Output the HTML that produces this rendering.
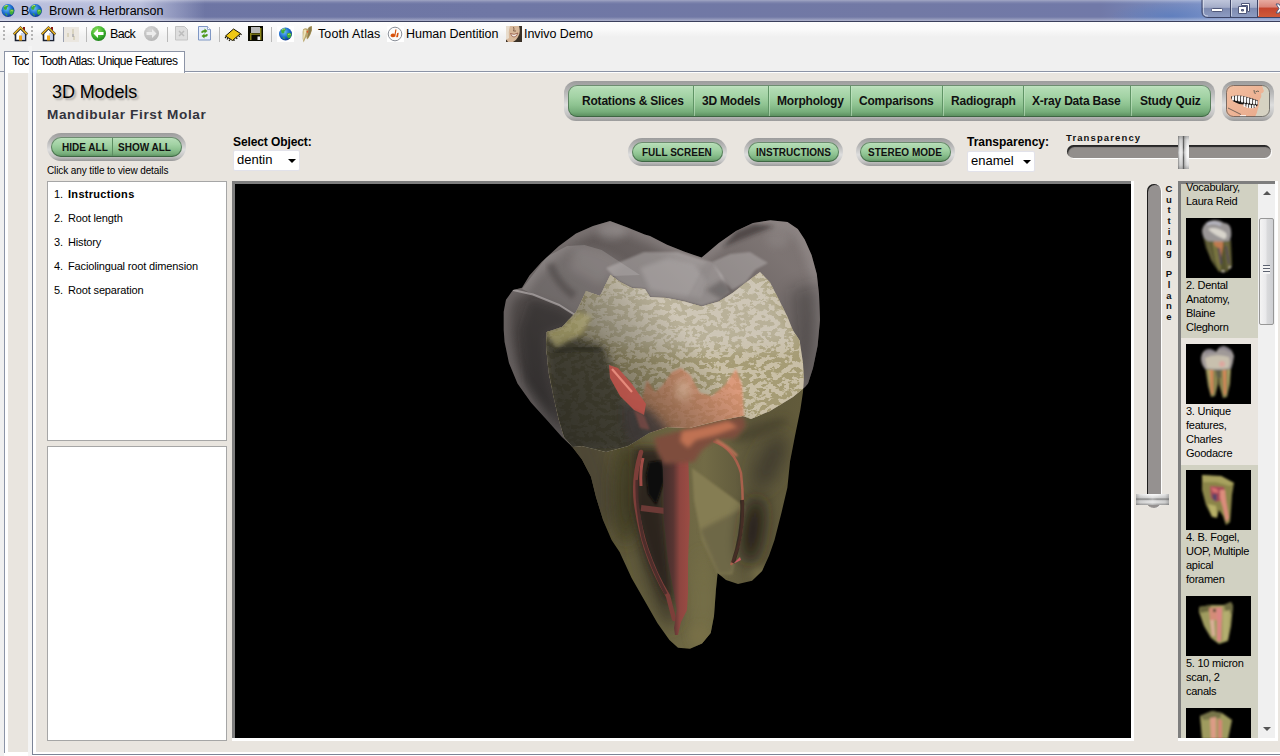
<!DOCTYPE html>
<html>
<head>
<meta charset="utf-8">
<title>Brown &amp; Herbranson</title>
<style>
*{box-sizing:border-box;margin:0;padding:0}
html,body{width:1280px;height:756px;overflow:hidden;background:#fff;font-family:"Liberation Sans",sans-serif;color:#000}
.abs{position:absolute}
#titlebar{left:0;top:0;width:1280px;height:21px;background:
linear-gradient(rgba(255,255,255,0.35) 0,rgba(255,255,255,0.12) 2px,rgba(255,255,255,0) 4px,rgba(255,255,255,0) 17px,rgba(255,255,255,0.3) 20px,rgba(255,255,255,0.45) 21px),
linear-gradient(90deg,rgba(205,210,235,0.8) 0,rgba(205,210,235,0.8) 140px,rgba(205,210,235,0.45) 168px,rgba(205,210,235,0) 205px),
radial-gradient(ellipse 60px 14px at 1170px 16px,rgba(80,120,190,0.6),rgba(80,120,190,0) 100%),
linear-gradient(90deg,#6c74a3 0,#6f77a5 500px,#7279a5 900px,#7179a8 1100px,#7d92c6 1200px,#7d92c6 1280px)}
#titlebar .t{position:absolute;top:3px;font-size:12.5px;line-height:16px;color:#000;letter-spacing:-0.1px;white-space:nowrap}
#tline{left:0;top:21px;width:1280px;height:1px;background:#3a3f5c}
#toolbar{left:0;top:22px;width:1280px;height:24px;background:linear-gradient(#fdfdfd 0,#fafafa 30%,#f0f0f0 62%,#f0f0f0 100%)}
#tabstrip{left:0;top:46px;width:1280px;height:25px;background:#f0f0f0}
#tabline{left:0;top:71px;width:1280px;height:1px;background:#8c94a6}
.tb{position:absolute;top:26px;font-size:12.5px;line-height:16px;letter-spacing:-0.05px;color:#000;white-space:nowrap}
.sep{position:absolute;top:26px;width:1px;height:15px;background:#b5b5b5}
.grip{position:absolute;top:26px;width:2px;height:14px;background:repeating-linear-gradient(#bdbdbd 0 2px,transparent 2px 4px)}
.tab{position:absolute;top:51px;height:22px;background:#fff;border:1px solid #8c94a6;border-bottom:none;font-size:12px;line-height:18px;letter-spacing:-0.6px;white-space:nowrap;overflow:hidden}
#content{left:36px;top:73px;width:1244px;height:679px;background:#e9e5df}
.green{background:linear-gradient(#c4e4c4 0,#b2dbb3 12%,#a2d2a4 38%,#8ec391 62%,#76ad7a 84%,#55895a 100%);}
.bezel{position:absolute;background:linear-gradient(#9c9c9c 0,#b9b9b9 30%,#dedede 60%,#c2c2c2 85%,#9a9a9a 100%)}
.btxt{position:absolute;font-weight:bold;white-space:nowrap;color:#111}
.li{position:absolute;left:54px;font-size:11px;line-height:14px;white-space:nowrap;letter-spacing:-0.2px}
.li b{letter-spacing:0}
.sel{position:absolute;background:#fff;border:1px solid #e2e2ea;border-radius:2px;font-size:13px;line-height:18px;padding-left:3px}
.sel i{position:absolute;right:3px;top:8px;border:4px solid transparent;border-top:4px solid #000;border-bottom:none}
.cap{position:absolute;left:1186px;font-size:11px;line-height:14px;white-space:nowrap;letter-spacing:-0.25px}
.thumb{position:absolute;left:1186px;width:65px;height:60px;background:#000;overflow:hidden}

.nd{top:86px;width:2px;height:30px;background:linear-gradient(90deg,#5f9465 0 1px,rgba(200,232,200,0.55) 1px 2px)}
.nt{top:94px;font-size:12px;line-height:15px;letter-spacing:-0.2px}
.st{top:142px;font-size:10px;line-height:12px}
.st2{top:147px;font-size:10px;line-height:12px}
</style>
</head>
<body>
<div id="titlebar" class="abs">
  <span class="t" style="left:21px">B</span>
  <span class="t" style="left:49px">Brown &amp; Herbranson</span>
</div>
<div id="tline" class="abs"></div>
<div id="toolbar" class="abs"></div>
<div id="tabstrip" class="abs"></div>
<div id="tabline" class="abs"></div>


<!-- title icons -->
<svg class="abs" style="left:0;top:0" width="60" height="22" viewBox="0 0 60 22">
 <defs>
  <radialGradient id="gl" cx="0.4" cy="0.35" r="0.7"><stop offset="0" stop-color="#6fc0f8"/><stop offset="0.55" stop-color="#1c6fd0"/><stop offset="1" stop-color="#0a2f86"/></radialGradient>
  <g id="globe"><circle cx="0" cy="0" r="6.5" fill="url(#gl)"/><path d="M-4.5,-3.5 q2,-2.5 4.5,-2 q1,1.5 -1,2.5 q0.5,2 -1.5,2.5 q-2,-0.5 -2,-3z M1.5,-0.5 q3,-1.5 4.5,0.5 q0,3 -2.5,4.5 q-2.5,-1 -2,-5z M-3,2.5 q2,0 2.5,2.5 q-1.5,0.8 -2.5,-2.5z" fill="#3fae3a"/><path d="M-3.5,-4 q1.5,-1.5 3,-1 M2.5,0.5 q1.5,-0.8 2.5,0" stroke="#d9e86a" stroke-width="0.8" fill="none"/></g>
 </defs>
 <g transform="translate(8,10.5)"><circle cx="0" cy="0" r="6.5" fill="url(#gl)"/><path d="M-4.5,-3.5 q2,-2.5 4.5,-2 q1,1.5 -1,2.5 q0.5,2 -1.5,2.5 q-2,-0.5 -2,-3z M1.5,-0.5 q3,-1.5 4.5,0.5 q0,3 -2.5,4.5 q-2.5,-1 -2,-5z M-3,2.5 q2,0 2.5,2.5 q-1.5,0.8 -2.5,-2.5z" fill="#3fae3a"/><path d="M-3.5,-4 q1.5,-1.5 3,-1 M2.5,0.5 q1.5,-0.8 2.5,0" stroke="#d9e86a" stroke-width="0.8" fill="none"/></g>
 <g transform="translate(35.5,10.5)"><circle cx="0" cy="0" r="6.5" fill="url(#gl)"/><path d="M-4.5,-3.5 q2,-2.5 4.5,-2 q1,1.5 -1,2.5 q0.5,2 -1.5,2.5 q-2,-0.5 -2,-3z M1.5,-0.5 q3,-1.5 4.5,0.5 q0,3 -2.5,4.5 q-2.5,-1 -2,-5z M-3,2.5 q2,0 2.5,2.5 q-1.5,0.8 -2.5,-2.5z" fill="#3fae3a"/><path d="M-3.5,-4 q1.5,-1.5 3,-1 M2.5,0.5 q1.5,-0.8 2.5,0" stroke="#d9e86a" stroke-width="0.8" fill="none"/></g>
</svg>
<!-- window buttons -->
<svg class="abs" style="left:1200px;top:0" width="80" height="20" viewBox="0 0 80 20">
 <defs>
  <linearGradient id="wb" x1="0" y1="0" x2="0" y2="1"><stop offset="0" stop-color="#c3c9dd"/><stop offset="0.45" stop-color="#a4adc9"/><stop offset="0.5" stop-color="#7d8ab0"/><stop offset="1" stop-color="#8e9cc2"/></linearGradient>
  <linearGradient id="wr" x1="0" y1="0" x2="0" y2="1"><stop offset="0" stop-color="#e9b0a6"/><stop offset="0.45" stop-color="#d98478"/><stop offset="0.5" stop-color="#c4452f"/><stop offset="1" stop-color="#cf5a3a"/></linearGradient>
 </defs>
 <path d="M2,-1 V12 Q2,17.5 8,17.5 H81 V-1z" fill="url(#wb)" stroke="#3c4466" stroke-width="1"/>
 <path d="M57.500,-1 V17 H81 V-1z" fill="url(#wr)"/>
 <path d="M30.500,0 V17 M57.500,0 V17" stroke="#3c4466" stroke-width="1"/>
 <path d="M3.500,0 V12 Q3.500,16 8,16 M31.500,0 V16 M58.500,0 V16" stroke="#e0e4f0" stroke-width="1" fill="none" opacity="0.7"/>
 <rect x="11.500" y="8.500" width="11" height="3" rx="1" fill="#fff" stroke="#50587a" stroke-width="1"/>
 <path d="M41.500,3.500 h8 v8 h-2 v-6 h-6z" fill="#fff" stroke="#50587a" stroke-width="1"/>
 <path d="M38.500,6.500 h8 v7 h-8z M41.500,9.500 v1.500 h2 v-1.500z" fill="#fff" stroke="#50587a" stroke-width="1" fill-rule="evenodd"/>
 <path d="M76,4 l3,0 l3,4.500 l-3,4.500 l-3,0 l3,-4.500z" fill="#fff" stroke="#50587a" stroke-width="1"/>
</svg>
<!-- toolbar icons -->
<svg class="abs" style="left:0;top:22px" width="600" height="24" viewBox="0 22 600 24">
 <defs>
  <g id="home">
   <path d="M10,27 h2 v5 h-2z" fill="#8c1c10"/>
   <path d="M2.500,33 V40.500 H12.500 V33 L7.500,28z" fill="#fff" stroke="#1a2030" stroke-width="1.600"/>
   <path d="M8,33 L12,33 L12,40 L7,40z" fill="#b8c6e6" opacity="0.8"/>
   <path d="M0.800,34.500 L7.500,27.800 L14.200,34.500" fill="none" stroke="#2a2a2a" stroke-width="2.600"/>
   <path d="M0.800,34.300 L7.500,27.600 L14.200,34.300" fill="none" stroke="#f2b81e" stroke-width="1.400"/>
   <rect x="6" y="35.500" width="3" height="5" fill="#f0a818"/>
  </g>
  <radialGradient id="gb" cx="0.4" cy="0.3" r="0.75"><stop offset="0" stop-color="#8fe060"/><stop offset="0.6" stop-color="#3bb22c"/><stop offset="1" stop-color="#1d7d1a"/></radialGradient>
  <radialGradient id="gg" cx="0.4" cy="0.3" r="0.75"><stop offset="0" stop-color="#d6d6d6"/><stop offset="1" stop-color="#b4b4b4"/></radialGradient>
 </defs>
 <g fill="#b4b4b4"><rect x="3" y="26" width="2" height="2"/><rect x="3" y="30" width="2" height="2"/><rect x="3" y="34" width="2" height="2"/><rect x="3" y="38" width="2" height="2"/>
 <rect x="31" y="26" width="2" height="2"/><rect x="31" y="30" width="2" height="2"/><rect x="31" y="34" width="2" height="2"/><rect x="31" y="38" width="2" height="2"/></g>
 <g transform="translate(13,0)">
   <path d="M10,27 h2 v5 h-2z" fill="#8c1c10"/>
   <path d="M2.500,33 V40.500 H12.500 V33 L7.500,28z" fill="#fff" stroke="#1a2030" stroke-width="1.600"/>
   <path d="M8,33 L12,33 L12,40 L7,40z" fill="#b8c6e6" opacity="0.8"/>
   <path d="M0.800,34.500 L7.500,27.800 L14.200,34.500" fill="none" stroke="#2a2a2a" stroke-width="2.600"/>
   <path d="M0.800,34.300 L7.500,27.600 L14.200,34.300" fill="none" stroke="#f2b81e" stroke-width="1.400"/>
   <rect x="6" y="35.500" width="3" height="5" fill="#f0a818"/>
  </g>
 <g transform="translate(41,0)">
   <path d="M10,27 h2 v5 h-2z" fill="#8c1c10"/>
   <path d="M2.500,33 V40.500 H12.500 V33 L7.500,28z" fill="#fff" stroke="#1a2030" stroke-width="1.600"/>
   <path d="M8,33 L12,33 L12,40 L7,40z" fill="#b8c6e6" opacity="0.8"/>
   <path d="M0.800,34.500 L7.500,27.800 L14.200,34.500" fill="none" stroke="#2a2a2a" stroke-width="2.600"/>
   <path d="M0.800,34.300 L7.500,27.600 L14.200,34.300" fill="none" stroke="#f2b81e" stroke-width="1.400"/>
   <rect x="6" y="35.500" width="3" height="5" fill="#f0a818"/>
  </g>
 <!-- faded icon -->
 <rect x="63" y="27" width="16" height="15" fill="#ebe7e0"/>
 <rect x="63" y="27" width="1" height="15" fill="#9aa0b0"/>
 <path d="M73,29 v5 M68,33 v4 M74,36 v4" stroke="#c8c0a0" stroke-width="1"/>
 <path d="M73,34 v3" stroke="#8a8a90" stroke-width="1"/>
 <rect x="86" y="27" width="1" height="15" fill="#b9b9b9"/>
 <!-- back -->
 <circle cx="98.500" cy="33.500" r="7.500" fill="url(#gb)"/>
 <path d="M93.500,33.500 l4.500,-4.500 v3 h5.500 v3 h-5.500 v3z" fill="#fff"/>
 <!-- forward -->
 <circle cx="151.500" cy="33.500" r="7.500" fill="url(#gg)"/>
 <path d="M156.500,33.500 l-4.500,-4.500 v3 h-5.500 v3 h5.500 v3z" fill="#ececec"/>
 <rect x="167" y="27" width="1" height="15" fill="#b9b9b9"/>
 <!-- stop doc -->
 <path d="M175.500,26.500 h9 l3,3 v10.500 h-12z" fill="#dedede" stroke="#c4c4c4" stroke-width="1"/>
 <path d="M179,31 l5,5 M184,31 l-5,5" stroke="#bcbcbc" stroke-width="1.500"/>
 <!-- refresh doc -->
 <path d="M198.500,26.500 h9 l3,3 v10.500 h-12z" fill="#e4ecfa" stroke="#7f97c4" stroke-width="1"/>
 <path d="M207.500,26.500 v3 h3" fill="#fff" stroke="#7f97c4" stroke-width="0.800"/>
 <path d="M201,32.500 q0.500,-2.500 3.500,-2.500 v-1.500 l3,2.500 l-3,2.500 v-1.500 q-1.500,0 -1.500,1z M208,34.500 q-0.500,2.500 -3.500,2.500 v1.500 l-3,-2.500 l3,-2.500 v1.500 q1.500,0 1.500,-1z" fill="#4e9a1e"/>
 <rect x="219" y="27" width="1" height="15" fill="#b9b9b9"/>
 <!-- chip -->
 <path d="M225.500,36 L233.500,29 L240.500,33.500 L232.500,40.500z" fill="#f0c814" stroke="#141000" stroke-width="1"/>
 <path d="M226,37 l-1,1 M228,38 l-1,1.500 M230,39.500 l-1,1.500 M234,39.500 l0,1.500 M236.500,37.500 l0.500,1.500 M239,35.500 l0.500,1.500 M240.500,33.800 l1,1" stroke="#141000" stroke-width="1.200"/>
 <!-- floppy -->
 <rect x="248" y="26" width="15" height="15" fill="#0a0a00"/>
 <rect x="251" y="27" width="9" height="6" fill="#b8b8b8"/>
 <rect x="250" y="33" width="1.500" height="7" fill="#8a8418"/><rect x="260" y="28" width="1.500" height="12" fill="#8a8418"/><rect x="250" y="33.500" width="11" height="1.300" fill="#8a8418"/>
 <rect x="257.500" y="36.500" width="2.500" height="3.500" fill="#e8e8e8"/>
 <rect x="271" y="27" width="1" height="15" fill="#b9b9b9"/>
 <!-- globe -->
 <rect x="277" y="26" width="17" height="16" fill="#fff"/>
 <g transform="translate(285.500,34)"><circle cx="0" cy="0" r="6.5" fill="url(#gl)"/><path d="M-4.5,-3.5 q2,-2.5 4.5,-2 q1,1.5 -1,2.5 q0.5,2 -1.5,2.5 q-2,-0.5 -2,-3z M1.5,-0.5 q3,-1.5 4.5,0.5 q0,3 -2.5,4.5 q-2.5,-1 -2,-5z M-3,2.5 q2,0 2.5,2.5 q-1.5,0.8 -2.5,-2.5z" fill="#3fae3a"/><path d="M-3.5,-4 q1.5,-1.5 3,-1 M2.5,0.5 q1.5,-0.8 2.5,0" stroke="#d9e86a" stroke-width="0.8" fill="none"/></g>
 <!-- tooth -->
 <path d="M303,29.500 q2.500,-2 4.500,-0.500 q1.500,-3 4.500,-3 q0.800,4 -1.500,8.500 q-1.500,3.500 -3.500,5 q-0.800,-1.500 -0.300,-3 q-2,2.500 -3,6 q-1.500,-4 -1,-8 q-0.200,-3 0.300,-5z" fill="#b8a66c"/>
 <path d="M308.500,28 q1.500,-1.500 3,-1.500 q0.500,4 -1.500,8 q-1.500,3 -3,4.500 q1.500,-5 1.500,-11z" fill="#8c7c4c"/>
 <path d="M303.500,30 q1.800,-1.200 3,0 q-0.500,3.500 -1.500,6 q-0.800,2.500 -1.500,4.500 q-0.600,-4 0,-7.500z" fill="#eee2b8"/>
 <path d="M306.500,31 l2,-0.500 l-1,3z" fill="#e0582c"/>
 <!-- dj icon -->
 <rect x="387" y="26" width="17" height="16" fill="#fff"/>
 <circle cx="395" cy="34" r="6.800" fill="#fbfbfb" stroke="#8a8f98" stroke-width="1"/>
 <path d="M390.500,36 q0,-2.500 2.500,-2.500 q1.500,0 1.500,1 l0.800,-5 l1.200,0 l-1.200,7 q-3,1.800 -4.800,-0.500z M397.200,33 l1.500,-0.200 l-0.600,4 q-1,1 -2,0.200z" fill="#d8520c"/>
 <!-- face -->
 <rect x="506" y="26" width="16" height="16" fill="#3a3026"/>
 <path d="M506,26 h13 q2,6 -1,11 q-2,4 -5,5 h-5 q-2,-2 -2,-6z" fill="#d8b89a"/>
 <path d="M506,26 h4 q-2,6 -1,12 l-3,2z" fill="#e8dccc"/>
 <path d="M510.500,33.500 q3.500,2 7.500,-0.500 q-1.500,4 -4,4 q-2.500,0 -3.500,-3.500z" fill="#f6efe8" stroke="#8a4a3a" stroke-width="0.700"/>
 <path d="M513.500,27 q1,2 0,4 h2.500" stroke="#7a5a46" stroke-width="0.900" fill="none"/>
</svg>
<span class="tb" style="left:110px;letter-spacing:-0.7px">Back</span>
<span class="tb" style="left:318px;letter-spacing:0.12px">Tooth Atlas</span>
<span class="tb" style="left:406px">Human Dentition</span>
<span class="tb" style="left:524px">Invivo Demo</span>

<!-- back window sliver -->
<div class="abs" style="left:0;top:72px;width:4px;height:684px;background:#f0f0f0"></div>
<div class="abs" style="left:4px;top:73px;width:1px;height:680px;background:#8c94a6"></div>
<div class="abs" style="left:8px;top:73px;width:20px;height:679px;background:#e9e5df"></div>
<div class="abs" style="left:28px;top:46px;width:4px;height:710px;background:#f4f4f4"></div>
<!-- front window borders -->
<div class="abs" style="left:32px;top:73px;width:1px;height:682px;background:#7c8496"></div>
<div class="abs" style="left:32px;top:754px;width:1248px;height:1px;background:#7c8496"></div>

<div class="tab" style="left:4px;width:25px;padding-left:7px;border-right:none">Toc</div>
<div class="tab" style="left:32px;width:153px;padding-left:7px">Tooth Atlas: Unique Features</div>

<div id="content" class="abs"></div>

<!-- ===== header text ===== -->
<div class="abs" style="left:52px;top:81px;font-size:18px;line-height:22px;white-space:nowrap;text-shadow:2px 2px 2px rgba(0,0,0,0.28);letter-spacing:-0.1px">3D Models</div>
<div class="abs" style="left:47px;top:106px;font-size:13.6px;line-height:18px;font-weight:bold;white-space:nowrap;color:#33333c;letter-spacing:0.62px">Mandibular First Molar</div>

<!-- ===== nav bar ===== -->
<div class="bezel" style="left:564px;top:81px;width:651px;height:40px;border-radius:12px"></div>
<div class="abs green" style="left:568px;top:85px;width:643px;height:32px;border-radius:9px;box-shadow:inset 0 0 0 1px rgba(40,70,45,0.55)"></div>
<div class="abs nd" style="left:693px"></div><div class="abs nd" style="left:768px"></div><div class="abs nd" style="left:850px"></div><div class="abs nd" style="left:942px"></div><div class="abs nd" style="left:1023px"></div><div class="abs nd" style="left:1130px"></div>
<span class="btxt nt" style="left:582px">Rotations &amp; Slices</span>
<span class="btxt nt" style="left:702px">3D Models</span>
<span class="btxt nt" style="left:777px">Morphology</span>
<span class="btxt nt" style="left:859px">Comparisons</span>
<span class="btxt nt" style="left:951px">Radiograph</span>
<span class="btxt nt" style="left:1032px">X-ray Data Base</span>
<span class="btxt nt" style="left:1140px">Study Quiz</span>

<!-- face button -->
<div class="bezel" style="left:1222px;top:81px;width:52px;height:40px;border-radius:12px"></div>
<svg class="abs" style="left:1226px;top:85px" width="44" height="32" viewBox="0 0 44 32">
 <defs><clipPath id="fc"><rect x="0" y="0" width="44" height="32" rx="7"/></clipPath>
 <linearGradient id="skin" x1="0" y1="0" x2="1" y2="1"><stop offset="0" stop-color="#f2bfa0"/><stop offset="1" stop-color="#e9aa8c"/></linearGradient></defs>
 <g clip-path="url(#fc)">
  <rect width="44" height="32" fill="#d6d2c2"/>
  <path d="M0,0 H36 Q37,4 38,6 Q37,8 35,8.500 Q36,12 34,14 Q33,18 32.500,22 Q31,28 29,32 H0z" fill="url(#skin)"/>
  <path d="M28,5 q0,3 1.500,4 M29.500,7 q2,-1.500 3.500,-0.500" stroke="#5a5a50" stroke-width="0.900" fill="none"/>
  <path d="M2,23 L15,29.500" stroke="#6a5a50" stroke-width="0.900"/>
  <path d="M14,31 h6" stroke="#fff" stroke-width="1.500"/>
  <path d="M5,11.500 q7,-2 14,0 q7,1.500 13,4 l-0.500,5 q-3,3 -7,2.500 q-4,-0.500 -7,-3.500 q-6,-0.500 -10,-3 q-2.500,-2 -2.500,-5z" fill="#1a1614"/>
  <g fill="#f6f6f6">
   <rect x="6" y="11" width="2.200" height="4.500" rx="1"/><rect x="9" y="10.500" width="2.300" height="5.500" rx="1"/><rect x="12" y="10.500" width="2.300" height="6" rx="1"/><rect x="15" y="11" width="2.300" height="6.500" rx="1"/><rect x="18" y="11.500" width="2.300" height="6.500" rx="1"/><rect x="21" y="12.500" width="2.300" height="6" rx="1"/><rect x="24" y="13.500" width="2.300" height="5.500" rx="1"/><rect x="27" y="14.500" width="2.200" height="5" rx="1"/><rect x="29.800" y="15.500" width="1.800" height="4" rx="0.900"/>
   <rect x="17.500" y="18.500" width="2" height="3.500" rx="0.900"/><rect x="20.300" y="19" width="2" height="4" rx="0.900"/><rect x="23" y="19.500" width="2" height="3.800" rx="0.900"/><rect x="25.700" y="19.800" width="2" height="3.500" rx="0.900"/><rect x="28.300" y="20" width="1.800" height="2.500" rx="0.900"/>
  </g>
 </g>
 <rect x="0.500" y="0.500" width="43" height="31" rx="7" fill="none" stroke="#4a4a4a" stroke-width="1" opacity="0.7"/>
</svg>

<!-- ===== hide/show ===== -->
<div class="bezel" style="left:47px;top:133px;width:139px;height:28px;border-radius:14px"></div>
<div class="abs green" style="left:51px;top:137px;width:131px;height:20px;border-radius:10px;box-shadow:inset 0 0 0 1px rgba(40,70,45,0.55)"></div>
<div class="abs" style="left:112px;top:138px;width:1px;height:18px;background:#5d8d62"></div>
<span class="btxt st" style="left:62px">HIDE ALL</span>
<span class="btxt st" style="left:118px">SHOW ALL</span>
<div class="abs" style="left:47px;top:165px;font-size:10px;line-height:12px;white-space:nowrap;letter-spacing:-0.1px">Click any title to view details</div>

<!-- small buttons -->
<div class="bezel" style="left:628px;top:138px;width:99px;height:28px;border-radius:14px"></div>
<div class="abs green" style="left:632px;top:142px;width:91px;height:20px;border-radius:10px;box-shadow:inset 0 0 0 1px rgba(40,70,45,0.55)"></div>
<span class="btxt st2" style="left:642px">FULL SCREEN</span>
<div class="bezel" style="left:744px;top:138px;width:99px;height:28px;border-radius:14px"></div>
<div class="abs green" style="left:748px;top:142px;width:91px;height:20px;border-radius:10px;box-shadow:inset 0 0 0 1px rgba(40,70,45,0.55)"></div>
<span class="btxt st2" style="left:756px">INSTRUCTIONS</span>
<div class="bezel" style="left:856px;top:138px;width:99px;height:28px;border-radius:14px"></div>
<div class="abs green" style="left:860px;top:142px;width:91px;height:20px;border-radius:10px;box-shadow:inset 0 0 0 1px rgba(40,70,45,0.55)"></div>
<span class="btxt st2" style="left:868px">STEREO MODE</span>

<!-- selects -->
<div class="abs" style="left:233px;top:135px;font-size:12px;line-height:15px;font-weight:bold;white-space:nowrap;letter-spacing:-0.1px">Select Object:</div>
<div class="sel" style="left:233px;top:150px;width:67px;height:21px">dentin<i></i></div>
<div class="abs" style="left:967px;top:135px;font-size:12px;line-height:15px;font-weight:bold;white-space:nowrap">Transparency:</div>
<div class="sel" style="left:967px;top:151px;width:68px;height:21px">enamel<i></i></div>

<!-- transparency slider -->
<div class="abs" style="left:1066px;top:132px;font-size:9.5px;line-height:12px;font-weight:bold;white-space:nowrap;letter-spacing:1.12px;color:#111">Transparency</div>
<div class="abs" style="left:1067px;top:145px;width:204px;height:13px;border-radius:7px;background:#928e8b;box-shadow:inset 1px 2px 1px rgba(20,20,20,0.85),1px 1px 0 rgba(255,255,255,0.9)"></div>
<div class="abs" style="left:1178px;top:136px;width:11px;height:33px;background:linear-gradient(rgba(90,90,90,0.45) 0,rgba(120,120,120,0.2) 12%,rgba(255,255,255,0) 35%,rgba(255,255,255,0.25) 50%,rgba(255,255,255,0) 65%,rgba(120,120,120,0.2) 88%,rgba(90,90,90,0.45) 100%),linear-gradient(90deg,#8a8a8a 0,#d8d8d8 14%,#ececec 28%,#c4c4c4 42%,#5e5e5e 50%,#b4b4b4 58%,#e4e4e4 72%,#fafafa 90%,#f4f4f4 100%)"></div>

<!-- ===== left list ===== -->
<div class="abs" style="left:47px;top:181px;width:180px;height:260px;background:#fff;border:1px solid #a6a6a6"></div>
<div class="abs" style="left:47px;top:446px;width:180px;height:295px;background:#fff;border:1px solid #a6a6a6"></div>
<div class="li" style="top:187px">1.<b style="position:absolute;left:14px;letter-spacing:0.3px">Instructions</b></div>
<div class="li" style="top:211px">2.<span style="position:absolute;left:14px;letter-spacing:-0.15px">Root length</span></div>
<div class="li" style="top:235px">3.<span style="position:absolute;left:14px;letter-spacing:-0.15px">History</span></div>
<div class="li" style="top:259px">4.<span style="position:absolute;left:14px;letter-spacing:-0.15px">Faciolingual root dimension</span></div>
<div class="li" style="top:283px">5.<span style="position:absolute;left:14px;letter-spacing:-0.15px">Root separation</span></div>

<!-- ===== 3D view ===== -->
<div class="abs" style="left:232px;top:181px;width:902px;height:560px;background:#fff"></div>
<div class="abs" style="left:232px;top:181px;width:899px;height:557px;background:#7e7e7e"></div>
<div class="abs" id="view" style="left:235px;top:184px;width:896px;height:554px;background:#000;overflow:hidden">
<!--TOOTH-START--><svg class="abs" style="left:0;top:0" width="896" height="554" viewBox="235 184 896 554">
 <defs>
  <path id="pEn" d="M610,221 L593,226 576,233.500 559,246 541.600,262 529.500,275.600 522,287.700 513,290 506,299.700 503.700,311.700 503.700,330 504.600,342 509,363 517.500,383.600 531,402.500 546.700,419.700 562,437 572.500,447 582,446 606,452 628,446 649,433 667,427 689,428 719,420.600 743,416 751,419 770,411 793,397 805,387 808,383.600 813,368 817.600,345.800 820,320 819,294.500 816.800,274 811.600,255 804.700,239.500 797.800,229 787.500,222 770.300,220.300 753,223 736,231 718.800,243 701.600,257.600 684,251.600 667,244.700 650,236 644.700,234.400 627.500,227.500z"/>
  <path id="pDe" d="M546.700,332 L562,327 576,312 582,300 586,291 600,296 610.300,274.800 620,282 632,288 645,289 650,297 667,298 684.400,301.400 701.600,306.600 718.800,301.400 732.500,293 746,282.500 760,272 770,282.500 779,300 787.500,317 792.700,330 799.600,340.600 803,363 803.800,380 803,392 800.300,410 795,435.800 790,461.600 787.400,487.400 781.400,513 774.500,540 769,555.800 762,571 752,580.700 738,584 726,580 717.600,573 715.900,590 714,616 710.700,633 702,643.500 690,648.700 678,647.800 669.400,640 657.400,623 645.400,602 631.600,578 619.600,552 611.600,540 603,519.700 596,497 591,476.700 582,459.500 570,444 564,437 558.800,419.700 553.600,397 548.500,371.600 546,345.800z"/>
  <clipPath id="cEn"><path d="M610,221 L593,226 576,233.500 559,246 541.600,262 529.500,275.600 522,287.700 513,290 506,299.700 503.700,311.700 503.700,330 504.600,342 509,363 517.500,383.600 531,402.500 546.700,419.700 562,437 572.500,447 582,446 606,452 628,446 649,433 667,427 689,428 719,420.600 743,416 751,419 770,411 793,397 805,387 808,383.600 813,368 817.600,345.800 820,320 819,294.500 816.800,274 811.600,255 804.700,239.500 797.800,229 787.500,222 770.300,220.300 753,223 736,231 718.800,243 701.600,257.600 684,251.600 667,244.700 650,236 644.700,234.400 627.500,227.500z" /></clipPath>
  <clipPath id="cDe"><path d="M546.700,332 L562,327 576,312 582,300 586,291 600,296 610.300,274.800 620,282 632,288 645,289 650,297 667,298 684.400,301.400 701.600,306.600 718.800,301.400 732.500,293 746,282.500 760,272 770,282.500 779,300 787.500,317 792.700,330 799.600,340.600 803,363 803.800,380 803,392 800.300,410 795,435.800 790,461.600 787.400,487.400 781.400,513 774.500,540 769,555.800 762,571 752,580.700 738,584 726,580 717.600,573 715.900,590 714,616 710.700,633 702,643.500 690,648.700 678,647.800 669.400,640 657.400,623 645.400,602 631.600,578 619.600,552 611.600,540 603,519.700 596,497 591,476.700 582,459.500 570,444 564,437 558.800,419.700 553.600,397 548.500,371.600 546,345.800z" /></clipPath>
  <filter id="b1" x="-20%" y="-20%" width="140%" height="140%"><feGaussianBlur stdDeviation="1"/></filter>
  <filter id="b2" x="-20%" y="-20%" width="140%" height="140%"><feGaussianBlur stdDeviation="2"/></filter>
  <filter id="b4" x="-100%" y="-100%" width="300%" height="300%"><feGaussianBlur stdDeviation="4"/></filter>
  <filter id="b8" x="-150%" y="-150%" width="400%" height="400%"><feGaussianBlur stdDeviation="8"/></filter>
  <filter id="b14" x="-50%" y="-50%" width="200%" height="200%"><feGaussianBlur stdDeviation="14"/></filter>
  <filter id="camo" x="0" y="0" width="100%" height="100%">
   <feTurbulence type="fractalNoise" baseFrequency="0.14 0.19" numOctaves="3" seed="11" result="n"/>
   <feColorMatrix in="n" type="matrix" values="0 0 0 0 0  0 0 0 0 0  0 0 0 0 0  14 0 0 0 -6.6" result="m"/>
   <feComposite in="SourceGraphic" in2="m" operator="in"/>
  </filter>
  <linearGradient id="gRoot" x1="560" y1="0" x2="800" y2="0" gradientUnits="userSpaceOnUse">
   <stop offset="0" stop-color="#4e4731"/><stop offset="0.3" stop-color="#625c3c"/><stop offset="0.6" stop-color="#726b46"/><stop offset="0.8" stop-color="#5c563a"/><stop offset="1" stop-color="#625b3b"/>
  </linearGradient>
  <linearGradient id="gEn" x1="540" y1="430" x2="740" y2="220" gradientUnits="userSpaceOnUse">
   <stop offset="0" stop-color="#8c8280" stop-opacity="0.46"/><stop offset="0.5" stop-color="#a29694" stop-opacity="0.56"/><stop offset="1" stop-color="#b2a6a4" stop-opacity="0.7"/>
  </linearGradient>
  <linearGradient id="gSh" x1="566" y1="440" x2="690" y2="335" gradientUnits="userSpaceOnUse"><stop offset="0" stop-color="#24221a" stop-opacity="0.7"/><stop offset="0.45" stop-color="#2a2818" stop-opacity="0.5"/><stop offset="1" stop-color="#2a2818" stop-opacity="0"/></linearGradient>
  <linearGradient id="gCan" x1="662" y1="0" x2="690" y2="0" gradientUnits="userSpaceOnUse"><stop offset="0" stop-color="#3e2c2a"/><stop offset="0.4" stop-color="#583532"/><stop offset="0.64" stop-color="#8e4640"/><stop offset="1" stop-color="#9c4c44"/></linearGradient>
 </defs>

 <!-- root / dentin body -->
 <path d="M546.700,332 L562,327 576,312 582,300 586,291 600,296 610.300,274.800 620,282 632,288 645,289 650,297 667,298 684.400,301.400 701.600,306.600 718.800,301.400 732.500,293 746,282.500 760,272 770,282.500 779,300 787.500,317 792.700,330 799.600,340.600 803,363 803.800,380 803,392 800.300,410 795,435.800 790,461.600 787.400,487.400 781.400,513 774.500,540 769,555.800 762,571 752,580.700 738,584 726,580 717.600,573 715.900,590 714,616 710.700,633 702,643.500 690,648.700 678,647.800 669.400,640 657.400,623 645.400,602 631.600,578 619.600,552 611.600,540 603,519.700 596,497 591,476.700 582,459.500 570,444 564,437 558.800,419.700 553.600,397 548.500,371.600 546,345.800z" fill="url(#gRoot)"/>
 <g clip-path="url(#cDe)">
  <!-- shading -->
  <ellipse cx="590" cy="470" rx="20" ry="60" fill="#4e4734" filter="url(#b8)" transform="rotate(-18 590 470)"/>
  <ellipse cx="655" cy="560" rx="14" ry="70" fill="#403b2a" filter="url(#b8)" transform="rotate(-14 655 560)"/>
  <ellipse cx="704" cy="600" rx="9" ry="45" fill="#756e46" filter="url(#b8)"/>
  <path d="M692,468 L745,507 732,574 718,574 702,540 694,500z" fill="#857d52" filter="url(#b1)"/>
  <path d="M700,530 L745,507 732,574 718,574z" fill="#6e6746" filter="url(#b2)"/>
  <ellipse cx="753" cy="530" rx="10" ry="34" fill="#221f18" filter="url(#b8)" transform="rotate(8 753 530)"/>
  <ellipse cx="770" cy="462" rx="12" ry="30" fill="#423d2e" filter="url(#b8)" transform="rotate(25 770 462)"/>
  <ellipse cx="760" cy="430" rx="30" ry="6" fill="#423e2a" opacity="0.7" filter="url(#b4)" transform="rotate(-20 760 430)"/>
  <ellipse cx="762" cy="574" rx="12" ry="7" fill="#746d46" filter="url(#b4)"/>
  <ellipse cx="700" cy="636" rx="10" ry="10" fill="#787046" filter="url(#b4)"/>
  <!-- dark hollow left of main canal -->
  <ellipse cx="626" cy="492" rx="13" ry="52" fill="#38341f" opacity="0.75" filter="url(#b8)"/>
  <path d="M634,448 L664,448 666,520 672,600 666,600 648,560 634,510z" fill="#2a241c" opacity="0.9" filter="url(#b4)"/>
  <path d="M649,462 L663,460 664,482 656,505 648,494 646,475z" fill="#0a0807" filter="url(#b1)"/>
  <!-- left canal -->
  <path d="M641,452 Q633,478 636,503 Q640,530 646,548 Q655,575 668,596 L674,619" fill="none" stroke="#7c3e39" stroke-width="4.500" stroke-linecap="round"/>
  <path d="M637,480 Q636,506 643,538 Q651,566 666,594" fill="none" stroke="#452b29" stroke-width="3" opacity="0.85"/>
  <path d="M641,508 L665,511" stroke="#6c3a36" stroke-width="6"/>
  <path d="M643,458 Q640,470 641,486" stroke="#a04c46" stroke-width="3" fill="none"/>
  <!-- main canal -->
  <path d="M660,440 L663,470 663.600,517 668,561 674,593 676.700,610 674,628 675,635 678,635 681,622 687,610 688,593 688,561 689.800,517 688.400,459 694,440z" fill="url(#gCan)"/>
  <!-- right canal -->
  <path d="M713,441 Q734,448 741,473 Q744,500 742,525 Q740,548 731,565" fill="none" stroke="#a8604c" stroke-width="2.500"/>
  <path d="M742,500 Q744,530 733,563" fill="none" stroke="#2c201c" stroke-width="4" opacity="0.8"/>
  <path d="M733,564 l7,-7 l1,3z" fill="#c85a64"/>
  <!-- lower chamber (salmon) -->
  <path d="M654,438 L690,428 720,421 743,416 746,426 736,438 716,440 702,450 694,462 664,464 657,452z" fill="#7e4e3c" filter="url(#b2)"/>
  <path d="M682,431 L700,428 728,421 738,427 716,435 696,440 688,448 680,441z" fill="#c07252" filter="url(#b2)"/>
  <path d="M716,440 Q728,446 737,456" stroke="#c8745a" stroke-width="2.500" fill="none" filter="url(#b1)"/>
 </g>

 <!-- enamel translucent -->
 <path d="M610,221 L593,226 576,233.500 559,246 541.600,262 529.500,275.600 522,287.700 513,290 506,299.700 503.700,311.700 503.700,330 504.600,342 509,363 517.500,383.600 531,402.500 546.700,419.700 562,437 572.500,447 582,446 606,452 628,446 649,433 667,427 689,428 719,420.600 743,416 751,419 770,411 793,397 805,387 808,383.600 813,368 817.600,345.800 820,320 819,294.500 816.800,274 811.600,255 804.700,239.500 797.800,229 787.500,222 770.300,220.300 753,223 736,231 718.800,243 701.600,257.600 684,251.600 667,244.700 650,236 644.700,234.400 627.500,227.500z" fill="url(#gEn)"/>
 <g clip-path="url(#cEn)">
  <path d="M610,221 L593,226 576,233.500 559,246 541.600,262 529.500,275.600 522,287.700 513,290 506,299.700 503.700,311.700 503.700,330 504.600,342 509,363 517.500,383.600 531,402.500 546.700,419.700 562,437 572.500,447 582,446 606,452 628,446 649,433 667,427 689,428 719,420.600 743,416 751,419 770,411 793,397 805,387 808,383.600 813,368 817.600,345.800 820,320 819,294.500 816.800,274 811.600,255 804.700,239.500 797.800,229 787.500,222 770.300,220.300 753,223 736,231 718.800,243 701.600,257.600 684,251.600 667,244.700 650,236 644.700,234.400 627.500,227.500z" fill="none" stroke="#c0b8b8" stroke-width="14" opacity="0.26" filter="url(#b4)"/>
  <!-- darker lower-left inner -->
  <path d="M530,300 L559,307 583,322 546,334 548,372 560,425 572,445 545,420 525,385 520,330z" fill="#141212" opacity="0.34" filter="url(#b4)"/>
  <!-- left inner layer -->
  <path d="M522,289 L546.700,256.700 567,246 584.500,245 601.700,250 617,260 640,275 612,276 600,296 583,320 559,305 533,294.500z" fill="#d8d2d2" opacity="0.22"/>
  <path d="M550,264 Q556,282 574,296" stroke="#3c3838" stroke-width="8" fill="none" opacity="0.4" filter="url(#b2)"/>
  <path d="M575,246 Q600,246 625,262 L600,285 570,270z" fill="#d0caca" opacity="0.14" filter="url(#b4)"/>
  <path d="M513,290 L533,294.500 559,305 583,320" fill="none" stroke="#c0b9b9" stroke-width="2" opacity="0.6"/>
  <!-- centre lighter -->
  <path d="M606,268 L620,262 644,252 678,252 700,259 712,262 722,275 730,292 720,300 702,306 684,301 667,298 650,297 645,289 632,288 618,281z" fill="#d8d4d4" opacity="0.36" filter="url(#b1)"/>
  <path d="M640,268 L668,258 694,264 706,280 700,298 672,294 650,290z" fill="#e0dcdc" opacity="0.2" filter="url(#b2)"/>
  <path d="M712,262 L730,254 750,252 768,263 755,270 746,282 732,290 722,280z" fill="#d4d0d0" opacity="0.34" filter="url(#b1)"/>
  <path d="M686,300 L706,262 714,262 696,303z" fill="#8c8686" opacity="0.35" filter="url(#b1)"/>
  <path d="M706,290 L722,280 732,290 722,300z" fill="#4e4848" opacity="0.45" filter="url(#b2)"/>
  <!-- right cusp dark band and light -->
  <path d="M736,231 L753,224 775,226 760,232 740,240 722,248z" fill="#1c1818" opacity="0.5" filter="url(#b2)"/>
  <ellipse cx="778" cy="238" rx="12" ry="10" fill="#d0cccc" opacity="0.12" filter="url(#b4)"/>
  <ellipse cx="612" cy="232" rx="14" ry="7" fill="#d0cccc" opacity="0.3" filter="url(#b4)"/>
  <!-- right side darker toward bottom -->
  <path d="M790,290 L824,280 824,392 800,398z" fill="#181515" opacity="0.3" filter="url(#b8)"/>
 </g>

 <!-- crown dentin (camo) -->
 <g clip-path="url(#cEn)">
  <g clip-path="url(#cDe)">
   <rect x="540" y="268" width="270" height="190" fill="#c9bfa6"/>
   <rect x="540" y="268" width="270" height="190" fill="#a69c74" filter="url(#camo)"/>
   <!-- gray wash upper centre -->
   <path d="M578,305 L610,278 765,272 798,345 700,352 625,348 592,336z" fill="#d6d2d0" opacity="0.4" filter="url(#b8)"/>
   <!-- pulp chamber under camo -->
   <path d="M647,380 L655,392 662,386 672,372 681,368 690,375 700,393 712,396 725,385 736,369 742,385 744,416 735,430 720,440 700,445 680,455 665,450 655,440 648,425 640,405z" fill="#e28c6c" opacity="0.72" filter="url(#b1)"/>
   <ellipse cx="683" cy="390" rx="8" ry="11" fill="#ffd8bc" opacity="0.65" filter="url(#b4)"/>
   <!-- left dark shading -->
   <rect x="540" y="268" width="270" height="190" fill="url(#gSh)"/>
   <path d="M544,340 L575,337 604,346 614,372 626,400 640,420 650,452 556,452z" fill="#23211a" opacity="0.62" filter="url(#b4)"/>
   <path d="M546,332 L562,327 578,312 592,316 582,334 556,348z" fill="#b0a870" opacity="0.6" filter="url(#b2)"/>
   <path d="M556,352 Q580,345 602,350" stroke="#1e1c14" stroke-width="5" fill="none" opacity="0.5" filter="url(#b2)"/>
   <!-- shadow under left horn -->
   <path d="M622,400 L650,410 668,430 660,446 630,446 622,425z" fill="#3c3838" opacity="0.85" filter="url(#b4)"/>
   <!-- left horn -->
   <path d="M609,365 L618,368 632,384 646,404 644,415 634,410 620,396 610,378z" fill="#b8524a" opacity="0.95"/>
   <path d="M612,369 L632,392" stroke="#ee9484" stroke-width="2.200" opacity="0.85"/>
   <path d="M634,410 L644,415 650,430 640,428z" fill="#7a4a44" opacity="0.8" filter="url(#b1)"/>
  </g>
 </g>
</svg>
<!--TOOTH-END-->
</div>

<!-- ===== cutting plane ===== -->
<div class="abs" style="left:1147px;top:184px;width:14px;height:324px;border-radius:7px;background:#959190;box-shadow:inset 1px 1px 0 rgba(15,15,15,0.9),1px 0 0 rgba(255,255,255,0.95)"></div>
<div class="abs" style="left:1136px;top:494px;width:33px;height:11px;background:linear-gradient(90deg,rgba(90,90,90,0.4) 0,rgba(120,120,120,0.15) 12%,rgba(255,255,255,0) 35%,rgba(255,255,255,0.25) 50%,rgba(255,255,255,0) 65%,rgba(120,120,120,0.15) 88%,rgba(90,90,90,0.4) 100%),linear-gradient(#fafafa 0,#e6e6e6 18%,#d2d2d2 36%,#7a7a7a 46%,#c8c8c8 56%,#e6e6e6 74%,#b4b4b4 92%,#9a9a9a 100%)"></div>
<div class="abs" id="cut" style="left:1163px;top:184px;width:12px;font-size:9.5px;font-weight:bold;line-height:10.65px;text-align:center;color:#111">C<br>u<br>t<br>t<br>i<br>n<br>g<br>&nbsp;<br>P<br>l<br>a<br>n<br>e</div>

<!-- ===== thumbnail list ===== -->
<svg class="abs" width="0" height="0" style="left:0;top:0"><defs>
<filter id="tb1" x="-20%" y="-20%" width="140%" height="140%"><feGaussianBlur stdDeviation="0.8"/></filter>
<filter id="tb2" x="-20%" y="-20%" width="140%" height="140%"><feGaussianBlur stdDeviation="1.6"/></filter>
</defs></svg>

<div class="abs" style="left:1178px;top:181px;width:100px;height:560px;background:#fff"></div>
<div class="abs" style="left:1178px;top:181px;width:97px;height:557px;background:#7e7e7e"></div>
<div class="abs" id="tl" style="left:1181px;top:184px;width:77px;height:554px;background:#d1d1c2;overflow:hidden"></div>
<div class="abs" style="left:1181px;top:338px;width:77px;height:127px;background:#e9e5df"></div>
<div class="abs" style="left:1258px;top:184px;width:17px;height:554px;background:#f0f0f0"></div>
<div class="abs" style="left:1259px;top:218px;width:15px;height:107px;border:1px solid #979797;border-radius:2px;background:linear-gradient(90deg,#f4f4f4 0,#e9e9eb 45%,#d9dadc 55%,#cfd0d3 100%)"></div>
<div class="abs" style="left:1263px;top:265px;width:7px;height:9px;background:repeating-linear-gradient(#5c6270 0 1px,#f4f4f4 1px 3px)"></div>
<div class="abs" style="left:1263px;top:191px;border:4px solid transparent;border-bottom:4px solid #555;border-top:none"></div>
<div class="abs" style="left:1263px;top:727px;border:4px solid transparent;border-top:4px solid #555;border-bottom:none"></div>

<div class="cap" style="top:180px">Vocabulary,<br>Laura Reid</div>
<div class="thumb" style="top:218px"><svg width="65" height="60" viewBox="0 0 65 60"><g filter="url(#tb1)">
<path d="M17,18 L22,22 45,22 46,48 41,54 33,54 26,44 20,30z" fill="#55532f"/>
<path d="M26,24 L30,24 35,50 33,53 29,42z" fill="#78743f"/>
<path d="M38,24 L43,24 45,47 41,52z" fill="#6c683c"/>
<path d="M20,22 L24,23 28,44 25,42z" fill="#66623a"/>
<path d="M28,22 h9 v6 l-3,18 l-2,-16 l-4,-3z" fill="#c07a50"/>
<path d="M33,30 L35,46" stroke="#4a4460" stroke-width="1.600"/><path d="M40,28 L43,46" stroke="#4a3c5c" stroke-width="1.400"/>
<path d="M16,12 Q18,3 28,2 Q34,2 38,5 Q44,5 45,12 Q46,20 43,23 Q32,24 22,23 Q16,20 16,12z" fill="#9a9696"/>
<path d="M22,11 Q30,8 40,15 Q42,20 38,21 Q28,17 22,11z" fill="#d8d4cc"/>
<path d="M21,6 Q28,3 35,7" stroke="#b8b8c4" stroke-width="2.500" fill="none"/>
<path d="M36,53 l2,1 M43,50 l2,-1" stroke="#e8e0c8" stroke-width="1.500"/>
</g></svg></div>
<div class="cap" style="top:278px">2. Dental<br>Anatomy,<br>Blaine<br>Cleghorn</div>
<div class="thumb" style="top:344px"><svg width="65" height="60" viewBox="0 0 65 60"><g filter="url(#tb1)">
<path d="M19,22 L32,24 32,40 29,52 25,53 22,42z" fill="#8a8450"/>
<path d="M32,24 L45,22 44,40 41,53 37,54 33,40z" fill="#8a8450"/>
<path d="M24,26 L27,26 27,50 25,50z" fill="#d8885a"/><path d="M37,26 L40,26 40,50 38,51z" fill="#d8885a"/>
<path d="M22,26 L24,26 24,46z M42,26 L44,26 42,46z" fill="#b4ae70"/>
<path d="M29,24 h6 v10 h-4z" fill="#5e5e48"/>
<path d="M15,14 Q16,5 24,5 Q28,6 30,8 Q33,2 38,2 Q46,4 48,12 Q47,20 45,25 Q32,27 19,25 Q15,20 15,14z" fill="#a09a98"/>
<path d="M19,14 Q30,9 43,13 Q45,20 42,24 Q30,25 21,24z" fill="#c8c0ae"/>
<ellipse cx="36" cy="20" rx="3" ry="3" fill="#dca8a0"/>
<path d="M19,9 Q24,5 28,8 M33,5 Q38,2 45,8" stroke="#86808a" stroke-width="2.500" fill="none"/>
</g></svg></div>
<div class="cap" style="top:404px">3. Unique<br>features,<br>Charles<br>Goodacre</div>
<div class="thumb" style="top:470px"><svg width="65" height="60" viewBox="0 0 65 60"><g filter="url(#tb1)">
<path d="M16,5 L26,6 35,6 48,13 46,25 45,40 44,52 40,55 37,46 33,40 31,48 26,47 20,35 16,20z" fill="#8b8549"/>
<path d="M16,5 L35,6 48,13 44,16 30,12 17,12z" fill="#a8a25e"/>
<path d="M22,34 L30,36 31,47 26,46z" fill="#b8b068"/>
<path d="M24,16 L38,17 39,26 36,30 30,32 25,28z" fill="#a84858"/>
<path d="M25,17 L31,19 33,23 27,22z" fill="#d87070"/>
<path d="M34,20 L39,20 40,30 43,48 40,52 37,38 34,28z" fill="#dc8c7c"/>
<path d="M26,24 L31,24 31,31 27,30z" fill="#5a4466"/>
</g></svg></div>
<div class="cap" style="top:530px">4. B. Fogel,<br>UOP, Multiple<br>apical<br>foramen</div>
<div class="thumb" style="top:596px"><svg width="65" height="60" viewBox="0 0 65 60"><g filter="url(#tb1)">
<path d="M13,11 L25,9 38,9 45,6 47,10 45,30 42,45 33,48 25,42 18,30 13,16z" fill="#9f9b5e"/>
<path d="M13,11 L25,9 24,15 14,17z" fill="#6a683c"/>
<path d="M38,9 L45,6 47,10 46,18 39,14z" fill="#6e6c42"/>
<path d="M23,12 L36,11 36,24 24,24z" fill="#d48c78"/>
<path d="M31,12 L36,12 35,45 31,45z" fill="#dc8684"/>
<path d="M24,24 L28,24 29,40 26,40z" fill="#dcb09a"/>
<rect x="27" y="13" width="3" height="3" fill="#4a4830"/>
<path d="M37,16 L44,14 42,42 37,46z" fill="#b4ae70"/>
</g></svg></div>
<div class="cap" style="top:656px">5. 10 micron<br>scan, 2<br>canals</div>
<div class="thumb" style="top:708px;height:30px"><svg width="65" height="30" viewBox="0 0 65 30"><g filter="url(#tb1)">
<path d="M14,8 L26,3 36,5 46,12 42,31 16,31z" fill="#9f9b5e"/>
<path d="M14,8 L26,3 36,5 34,10 18,12z" fill="#77744a"/>
<path d="M24,10 L30,9 30,31 25,31z" fill="#dc9c86"/>
<path d="M32,11 L36,12 36,31 32,31z" fill="#d48676"/>
</g></svg></div>


</body>
</html>
